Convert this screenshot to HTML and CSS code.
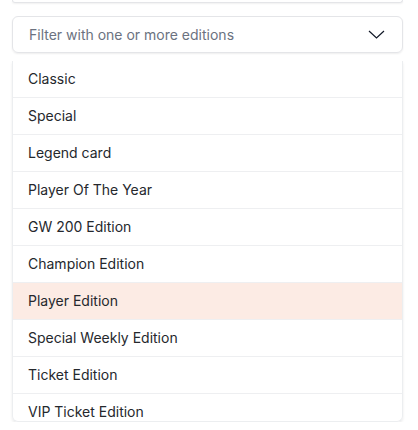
FILE: index.html
```html
<!DOCTYPE html>
<html>
<head>
<meta charset="utf-8">
<link rel="stylesheet" href="styles.css">
</head>
<body>
<div class="page">
  <div class="prev-card"></div>
  <div class="select">
    <span class="placeholder">Filter with one or more editions</span>
    <svg class="chev" width="17" height="9" viewBox="0 0 17 9"><path d="M1 1 L8.5 8 L16 1" fill="none" stroke="#111827" stroke-width="1.2"/></svg>
  </div>
  <ul class="menu">
    <li class="item">Classic</li>
    <li class="item">Special</li>
    <li class="item">Legend card</li>
    <li class="item">Player Of The Year</li>
    <li class="item">GW 200 Edition</li>
    <li class="item">Champion Edition</li>
    <li class="item active">Player Edition</li>
    <li class="item">Special Weekly Edition</li>
    <li class="item">Ticket Edition</li>
    <li class="item">VIP Ticket Edition</li>
  </ul>
</div>
</body>
</html>
```
FILE: styles.css
```css
html, body {
  margin: 0;
  padding: 0;
  background: #ffffff;
}
body {
  font-family: Inter, "Liberation Sans", sans-serif;
  font-size: 14px;
  color: #25282d;
}
.page {
  padding: 0 15px 0 12px;
  display: flex;
  flex-direction: column;
}
.prev-card {
  height: 2px;
  border: 1px solid #e4e5e8;
  border-top: none;
  border-radius: 0 0 6px 6px;
  box-shadow: 0 1px 2px rgba(0,0,0,0.06);
}
.select {
  margin-top: 13px;
  height: 35px;
  border: 1px solid #e4e5e8;
  border-radius: 6px;
  box-shadow: 0 1px 2px rgba(0,0,0,0.07);
  display: flex;
  align-items: center;
  justify-content: space-between;
  padding: 0 17px 0 16px;
}
.placeholder {
  color: #6b7280;
  font-size: 14px;
}
.chev {
  display: block;
}
.menu {
  list-style: none;
  margin: 8px 0 0 0;
  padding: 0;
  height: 360px;
  overflow: hidden;
  border: 1px solid #eceef0;
  border-top: none;
  border-radius: 0 0 6px 6px;
  box-shadow: 0 2px 3px rgba(0,0,0,0.08);
}
.item {
  height: 36px;
  line-height: 36px;
  padding: 0 15px;
  border-bottom: 1px solid #eeeff1;
}
.item.active {
  background: #fcebe4;
}
```
